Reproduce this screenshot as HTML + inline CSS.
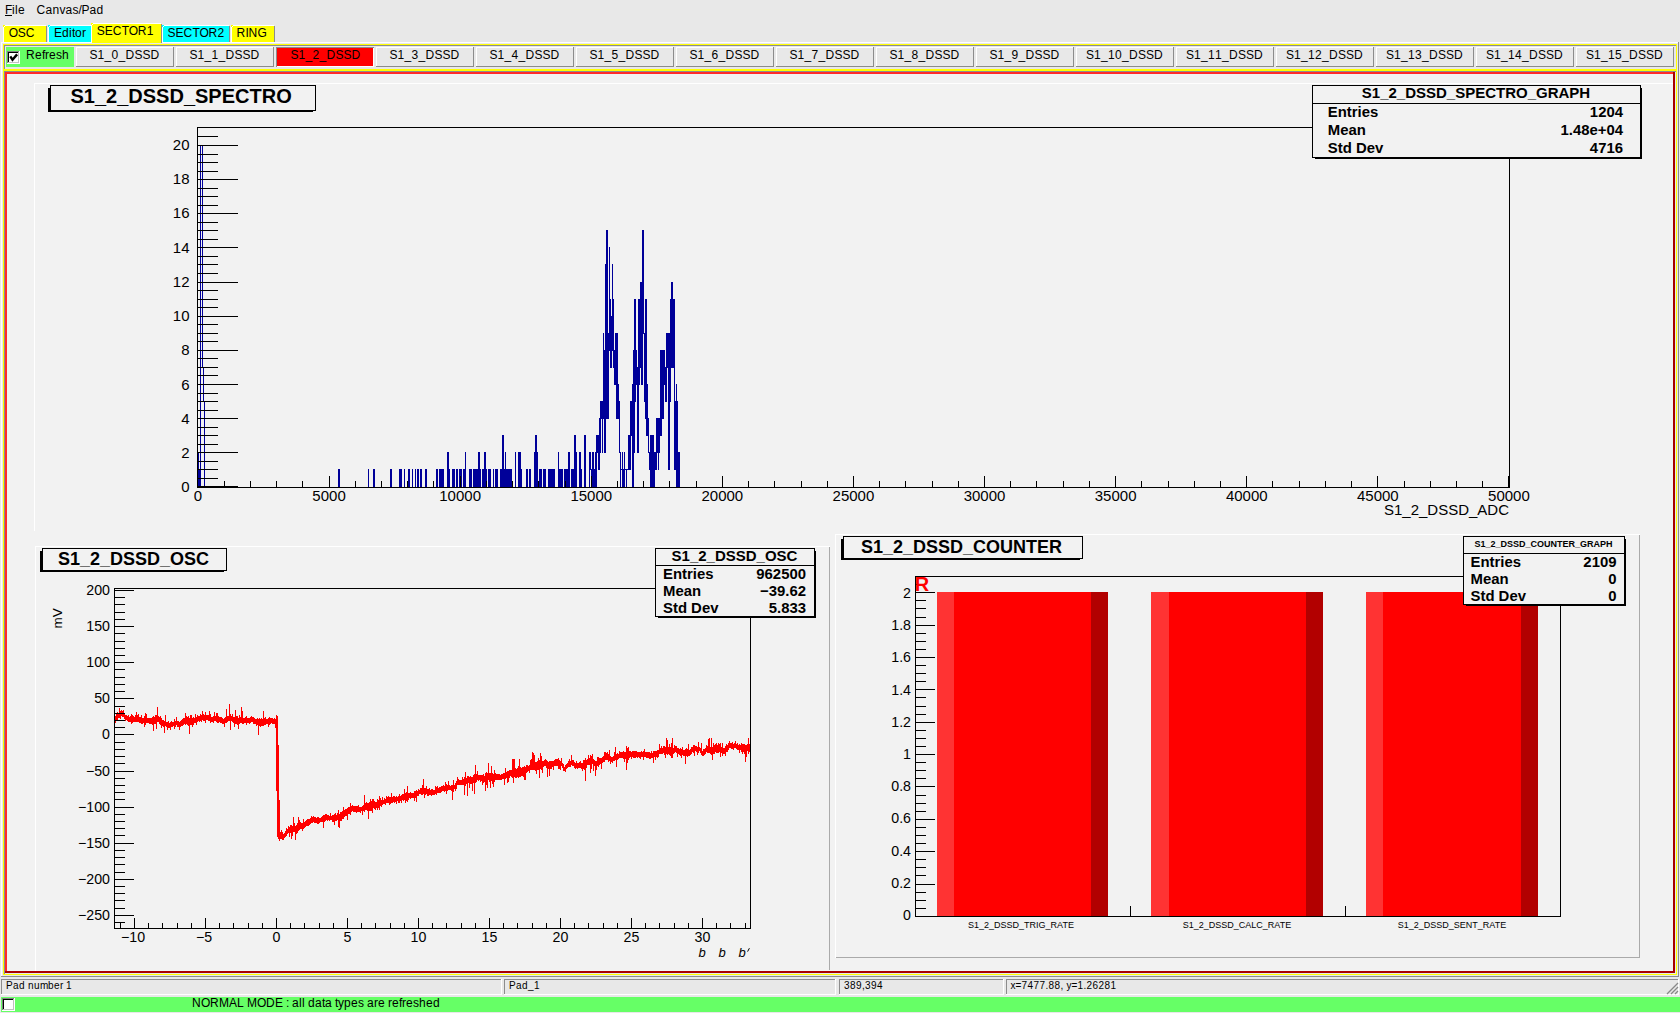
<!DOCTYPE html>
<html><head><meta charset="utf-8"><title>ROOT GUI</title>
<style>
html,body{margin:0;padding:0;width:1680px;height:1013px;overflow:hidden;background:#e8e8e8}
svg{display:block}
svg text{font-family:"Liberation Sans",sans-serif}
</style></head><body>
<svg width="1680" height="1013" viewBox="0 0 1680 1013" shape-rendering="crispEdges">
<rect x="0" y="0" width="1680" height="1013" fill="#e8e8e8"/>
<text x="5 12 15 18" y="14" font-size="12">File</text>
<rect x="5" y="15" width="7" height="1" fill="#000"/>
<text x="36.5 45.5 52.5 59.5 65.5 72.5 78.5 81.5 89.5 96.5" y="14" font-size="12">Canvas/Pad</text>
<rect x="1" y="42" width="1677" height="1" fill="#ffffff"/>
<rect x="1" y="42" width="1" height="935" fill="#ffffff"/>
<rect x="1" y="976" width="1678" height="1" fill="#8c8c8c"/>
<rect x="1678" y="42" width="1" height="935" fill="#8c8c8c"/>
<rect x="3" y="25" width="43" height="17" fill="#ffff00"/>
<rect x="5" y="25" width="41" height="1" fill="#ffffff"/>
<rect x="3" y="27" width="1" height="15" fill="#ffffff"/>
<rect x="4" y="26" width="1" height="1" fill="#ffffff"/>
<rect x="46" y="26" width="1" height="16" fill="#8c8c8c"/>
<text x="8.7 17.7 25.7" y="37" font-size="12">OSC</text>
<rect x="48" y="25" width="43" height="17" fill="#00ffff"/>
<rect x="50" y="25" width="41" height="1" fill="#ffffff"/>
<rect x="48" y="27" width="1" height="15" fill="#ffffff"/>
<rect x="49" y="26" width="1" height="1" fill="#ffffff"/>
<text x="54 62 69 72 75 82" y="37" font-size="12">Editor</text>
<rect x="162" y="25" width="67" height="17" fill="#00ffff"/>
<rect x="164" y="25" width="65" height="1" fill="#ffffff"/>
<rect x="162" y="27" width="1" height="15" fill="#ffffff"/>
<rect x="163" y="26" width="1" height="1" fill="#ffffff"/>
<rect x="229" y="26" width="1" height="16" fill="#8c8c8c"/>
<text x="167.4 175.4 183.4 192.4 199.4 208.4 217.4" y="37" font-size="12">SECTOR2</text>
<rect x="231" y="25" width="43" height="17" fill="#ffff00"/>
<rect x="233" y="25" width="41" height="1" fill="#ffffff"/>
<rect x="231" y="27" width="1" height="15" fill="#ffffff"/>
<rect x="232" y="26" width="1" height="1" fill="#ffffff"/>
<rect x="274" y="26" width="1" height="16" fill="#8c8c8c"/>
<text x="236.5 245.5 248.5 257.5" y="37" font-size="12">RING</text>
<rect x="91" y="23" width="70" height="20" fill="#ffff00"/>
<rect x="93" y="23" width="68" height="1" fill="#ffffff"/>
<rect x="91" y="25" width="1" height="18" fill="#ffffff"/>
<rect x="92" y="24" width="1" height="1" fill="#ffffff"/>
<rect x="161" y="24" width="1" height="19" fill="#8c8c8c"/>
<text x="96.8 104.8 112.8 121.8 128.8 137.8 146.8" y="35" font-size="12">SECTOR1</text>
<rect x="3" y="44" width="1674" height="1" fill="#ffff00"/>
<rect x="4" y="45" width="1672" height="1" fill="#8c8c8c"/>
<rect x="3" y="44" width="1" height="931" fill="#ffff00"/>
<rect x="4" y="45" width="1" height="929" fill="#8c8c8c"/>
<rect x="1676" y="44" width="1" height="931" fill="#ffff00"/>
<rect x="3" y="69" width="1674" height="2" fill="#ffff00"/>
<rect x="4" y="71" width="1672" height="1" fill="#8c8c8c"/>
<rect x="3" y="974" width="1674" height="1" fill="#ffff00"/>
<rect x="6" y="47" width="68" height="20" fill="#66ff66"/>
<rect x="7" y="51" width="13" height="13" fill="#ffffff"/>
<rect x="7" y="51" width="12" height="1" fill="#808080"/>
<rect x="7" y="51" width="1" height="12" fill="#808080"/>
<rect x="8" y="52" width="10" height="1" fill="#000"/>
<rect x="8" y="52" width="1" height="10" fill="#000"/>
<rect x="18" y="52" width="1" height="11" fill="#c0c0c0"/>
<rect x="8" y="62" width="11" height="1" fill="#c0c0c0"/>
<path d="M10.3 56.4 L12.5 59.8 L17.1 54.4" stroke="#000" stroke-width="2.4" fill="none" shape-rendering="geometricPrecision"/>
<text x="26 35 42 45 49 56 62" y="59" font-size="12">Refresh</text>
<rect x="76" y="47" width="98" height="20" fill="#e8e8e8"/>
<rect x="76" y="47" width="97" height="1" fill="#ffffff"/>
<rect x="76" y="47" width="1" height="19" fill="#ffffff"/>
<rect x="173" y="47" width="1" height="20" fill="#8c8c8c"/>
<rect x="76" y="66" width="98" height="1" fill="#8c8c8c"/>
<text x="89.5 97.5 104.5 111.5 118.5 125.5 134.5 142.5 150.5" y="59" font-size="12">S1_0_DSSD</text>
<rect x="176" y="47" width="98" height="20" fill="#e8e8e8"/>
<rect x="176" y="47" width="97" height="1" fill="#ffffff"/>
<rect x="176" y="47" width="1" height="19" fill="#ffffff"/>
<rect x="273" y="47" width="1" height="20" fill="#8c8c8c"/>
<rect x="176" y="66" width="98" height="1" fill="#8c8c8c"/>
<text x="189.5 197.5 204.5 211.5 218.5 225.5 234.5 242.5 250.5" y="59" font-size="12">S1_1_DSSD</text>
<rect x="276" y="47" width="98" height="20" fill="#ffffff"/>
<rect x="277" y="48" width="96" height="18" fill="#ff0000"/>
<rect x="276" y="47" width="98" height="1" fill="#8c8c8c"/>
<rect x="276" y="47" width="1" height="20" fill="#8c8c8c"/>
<text x="290.5 298.5 305.5 312.5 319.5 326.5 335.5 343.5 351.5" y="59" font-size="12">S1_2_DSSD</text>
<rect x="376" y="47" width="98" height="20" fill="#e8e8e8"/>
<rect x="376" y="47" width="97" height="1" fill="#ffffff"/>
<rect x="376" y="47" width="1" height="19" fill="#ffffff"/>
<rect x="473" y="47" width="1" height="20" fill="#8c8c8c"/>
<rect x="376" y="66" width="98" height="1" fill="#8c8c8c"/>
<text x="389.5 397.5 404.5 411.5 418.5 425.5 434.5 442.5 450.5" y="59" font-size="12">S1_3_DSSD</text>
<rect x="476" y="47" width="98" height="20" fill="#e8e8e8"/>
<rect x="476" y="47" width="97" height="1" fill="#ffffff"/>
<rect x="476" y="47" width="1" height="19" fill="#ffffff"/>
<rect x="573" y="47" width="1" height="20" fill="#8c8c8c"/>
<rect x="476" y="66" width="98" height="1" fill="#8c8c8c"/>
<text x="489.5 497.5 504.5 511.5 518.5 525.5 534.5 542.5 550.5" y="59" font-size="12">S1_4_DSSD</text>
<rect x="576" y="47" width="98" height="20" fill="#e8e8e8"/>
<rect x="576" y="47" width="97" height="1" fill="#ffffff"/>
<rect x="576" y="47" width="1" height="19" fill="#ffffff"/>
<rect x="673" y="47" width="1" height="20" fill="#8c8c8c"/>
<rect x="576" y="66" width="98" height="1" fill="#8c8c8c"/>
<text x="589.5 597.5 604.5 611.5 618.5 625.5 634.5 642.5 650.5" y="59" font-size="12">S1_5_DSSD</text>
<rect x="676" y="47" width="98" height="20" fill="#e8e8e8"/>
<rect x="676" y="47" width="97" height="1" fill="#ffffff"/>
<rect x="676" y="47" width="1" height="19" fill="#ffffff"/>
<rect x="773" y="47" width="1" height="20" fill="#8c8c8c"/>
<rect x="676" y="66" width="98" height="1" fill="#8c8c8c"/>
<text x="689.5 697.5 704.5 711.5 718.5 725.5 734.5 742.5 750.5" y="59" font-size="12">S1_6_DSSD</text>
<rect x="776" y="47" width="98" height="20" fill="#e8e8e8"/>
<rect x="776" y="47" width="97" height="1" fill="#ffffff"/>
<rect x="776" y="47" width="1" height="19" fill="#ffffff"/>
<rect x="873" y="47" width="1" height="20" fill="#8c8c8c"/>
<rect x="776" y="66" width="98" height="1" fill="#8c8c8c"/>
<text x="789.5 797.5 804.5 811.5 818.5 825.5 834.5 842.5 850.5" y="59" font-size="12">S1_7_DSSD</text>
<rect x="876" y="47" width="98" height="20" fill="#e8e8e8"/>
<rect x="876" y="47" width="97" height="1" fill="#ffffff"/>
<rect x="876" y="47" width="1" height="19" fill="#ffffff"/>
<rect x="973" y="47" width="1" height="20" fill="#8c8c8c"/>
<rect x="876" y="66" width="98" height="1" fill="#8c8c8c"/>
<text x="889.5 897.5 904.5 911.5 918.5 925.5 934.5 942.5 950.5" y="59" font-size="12">S1_8_DSSD</text>
<rect x="976" y="47" width="98" height="20" fill="#e8e8e8"/>
<rect x="976" y="47" width="97" height="1" fill="#ffffff"/>
<rect x="976" y="47" width="1" height="19" fill="#ffffff"/>
<rect x="1073" y="47" width="1" height="20" fill="#8c8c8c"/>
<rect x="976" y="66" width="98" height="1" fill="#8c8c8c"/>
<text x="989.5 997.5 1004.5 1011.5 1018.5 1025.5 1034.5 1042.5 1050.5" y="59" font-size="12">S1_9_DSSD</text>
<rect x="1076" y="47" width="98" height="20" fill="#e8e8e8"/>
<rect x="1076" y="47" width="97" height="1" fill="#ffffff"/>
<rect x="1076" y="47" width="1" height="19" fill="#ffffff"/>
<rect x="1173" y="47" width="1" height="20" fill="#8c8c8c"/>
<rect x="1076" y="66" width="98" height="1" fill="#8c8c8c"/>
<text x="1086 1094 1101 1108 1115 1122 1129 1138 1146 1154" y="59" font-size="12">S1_10_DSSD</text>
<rect x="1176" y="47" width="98" height="20" fill="#e8e8e8"/>
<rect x="1176" y="47" width="97" height="1" fill="#ffffff"/>
<rect x="1176" y="47" width="1" height="19" fill="#ffffff"/>
<rect x="1273" y="47" width="1" height="20" fill="#8c8c8c"/>
<rect x="1176" y="66" width="98" height="1" fill="#8c8c8c"/>
<text x="1186 1194 1201 1208 1215 1222 1229 1238 1246 1254" y="59" font-size="12">S1_11_DSSD</text>
<rect x="1276" y="47" width="98" height="20" fill="#e8e8e8"/>
<rect x="1276" y="47" width="97" height="1" fill="#ffffff"/>
<rect x="1276" y="47" width="1" height="19" fill="#ffffff"/>
<rect x="1373" y="47" width="1" height="20" fill="#8c8c8c"/>
<rect x="1276" y="66" width="98" height="1" fill="#8c8c8c"/>
<text x="1286 1294 1301 1308 1315 1322 1329 1338 1346 1354" y="59" font-size="12">S1_12_DSSD</text>
<rect x="1376" y="47" width="98" height="20" fill="#e8e8e8"/>
<rect x="1376" y="47" width="97" height="1" fill="#ffffff"/>
<rect x="1376" y="47" width="1" height="19" fill="#ffffff"/>
<rect x="1473" y="47" width="1" height="20" fill="#8c8c8c"/>
<rect x="1376" y="66" width="98" height="1" fill="#8c8c8c"/>
<text x="1386 1394 1401 1408 1415 1422 1429 1438 1446 1454" y="59" font-size="12">S1_13_DSSD</text>
<rect x="1476" y="47" width="98" height="20" fill="#e8e8e8"/>
<rect x="1476" y="47" width="97" height="1" fill="#ffffff"/>
<rect x="1476" y="47" width="1" height="19" fill="#ffffff"/>
<rect x="1573" y="47" width="1" height="20" fill="#8c8c8c"/>
<rect x="1476" y="66" width="98" height="1" fill="#8c8c8c"/>
<text x="1486 1494 1501 1508 1515 1522 1529 1538 1546 1554" y="59" font-size="12">S1_14_DSSD</text>
<rect x="1576" y="47" width="98" height="20" fill="#e8e8e8"/>
<rect x="1576" y="47" width="97" height="1" fill="#ffffff"/>
<rect x="1576" y="47" width="1" height="19" fill="#ffffff"/>
<rect x="1673" y="47" width="1" height="20" fill="#8c8c8c"/>
<rect x="1576" y="66" width="98" height="1" fill="#8c8c8c"/>
<text x="1586 1594 1601 1608 1615 1622 1629 1638 1646 1654" y="59" font-size="12">S1_15_DSSD</text>
<rect x="5" y="72" width="1670" height="2" fill="#ff2a2a"/>
<rect x="5" y="72" width="2" height="901" fill="#ff2a2a"/>
<rect x="5" y="971" width="1670" height="2" fill="#a80000"/>
<rect x="1673" y="72" width="2" height="901" fill="#a80000"/>
<rect x="7" y="74" width="1666" height="897" fill="#f2f2f2"/>
<rect x="34" y="83" width="1639" height="1" fill="#ffffff"/>
<rect x="34" y="83" width="1" height="448" fill="#ffffff"/>
<rect x="35" y="546" width="795" height="1" fill="#ffffff"/>
<rect x="35" y="546" width="1" height="425" fill="#ffffff"/>
<rect x="829" y="547" width="1" height="423" fill="#aaaaaa"/>
<rect x="835" y="534" width="805" height="1" fill="#ffffff"/>
<rect x="835" y="534" width="1" height="424" fill="#ffffff"/>
<rect x="1639" y="535" width="1" height="423" fill="#aaaaaa"/>
<rect x="836" y="957" width="804" height="1" fill="#aaaaaa"/>
<rect x="48" y="88" width="2" height="24" fill="#000"/>
<rect x="48" y="111" width="265" height="1" fill="#000"/>
<rect x="50" y="85" width="266" height="1" fill="#000"/>
<rect x="50" y="85" width="1" height="26" fill="#000"/>
<rect x="315" y="85" width="1" height="26" fill="#000"/>
<rect x="50" y="110" width="266" height="1" fill="#000"/>
<text x="70.5" y="103" font-size="20" font-weight="bold">S1_2_DSSD_SPECTRO</text>
<path d="M198 452h1V487h-1zM199 469h1V487h-1zM200 145h1V487h-1zM201 145h1V146h-1zM202 145h1V368h-1zM203 367h1V402h-1zM204 401h1V487h-1zM338 469h1V487h-1zM339 469h1V487h-1zM368 469h1V487h-1zM373 469h1V487h-1zM374 469h1V487h-1zM390 469h1V487h-1zM391 469h1V487h-1zM399 469h1V487h-1zM400 469h1V487h-1zM401 469h1V487h-1zM404 469h1V487h-1zM408 469h1V487h-1zM409 469h1V487h-1zM412 469h1V487h-1zM415 469h1V487h-1zM417 469h1V487h-1zM418 469h1V487h-1zM420 469h1V487h-1zM421 469h1V487h-1zM425 469h1V487h-1zM426 469h1V487h-1zM436 469h1V487h-1zM437 469h1V487h-1zM439 469h1V487h-1zM440 469h1V487h-1zM441 469h1V487h-1zM442 469h1V487h-1zM443 469h1V487h-1zM447 452h1V487h-1zM448 452h1V487h-1zM449 469h1V487h-1zM452 469h1V487h-1zM453 469h1V487h-1zM454 469h1V487h-1zM456 469h1V487h-1zM457 469h1V487h-1zM459 469h1V487h-1zM460 469h1V487h-1zM461 469h1V487h-1zM463 469h1V487h-1zM464 469h1V487h-1zM465 452h1V487h-1zM469 469h1V487h-1zM470 469h1V487h-1zM471 469h1V487h-1zM473 469h1V487h-1zM474 469h1V487h-1zM475 469h1V487h-1zM476 469h1V487h-1zM477 469h1V487h-1zM478 452h1V487h-1zM479 452h1V487h-1zM480 469h1V487h-1zM482 469h1V487h-1zM483 469h1V487h-1zM484 452h1V487h-1zM485 452h1V487h-1zM486 469h1V487h-1zM488 469h1V487h-1zM489 469h1V487h-1zM490 469h1V487h-1zM493 469h1V487h-1zM495 469h1V487h-1zM496 469h1V487h-1zM497 469h1V487h-1zM500 469h1V487h-1zM501 469h1V487h-1zM502 435h1V487h-1zM503 435h1V487h-1zM504 469h1V487h-1zM505 452h1V487h-1zM506 469h1V487h-1zM507 469h1V487h-1zM508 469h1V487h-1zM509 469h1V487h-1zM510 469h1V487h-1zM511 469h1V487h-1zM515 452h1V487h-1zM518 452h1V487h-1zM519 452h1V487h-1zM520 452h1V487h-1zM521 469h1V487h-1zM526 469h1V487h-1zM527 469h1V487h-1zM529 469h1V487h-1zM530 469h1V487h-1zM534 452h1V487h-1zM535 435h1V487h-1zM536 435h1V487h-1zM537 452h1V487h-1zM539 469h1V487h-1zM540 469h1V487h-1zM541 469h1V487h-1zM543 469h1V487h-1zM544 469h1V487h-1zM545 469h1V487h-1zM548 469h1V487h-1zM549 469h1V487h-1zM550 469h1V487h-1zM551 469h1V487h-1zM552 469h1V487h-1zM553 469h1V487h-1zM554 469h1V487h-1zM558 452h1V487h-1zM559 469h1V487h-1zM560 469h1V487h-1zM561 469h1V487h-1zM562 469h1V487h-1zM564 469h1V487h-1zM565 469h1V487h-1zM566 469h1V487h-1zM567 469h1V487h-1zM568 452h1V487h-1zM569 452h1V487h-1zM571 469h1V487h-1zM572 469h1V487h-1zM573 469h1V487h-1zM574 435h1V487h-1zM575 435h1V487h-1zM576 452h1V487h-1zM579 452h1V487h-1zM580 452h1V487h-1zM581 469h1V487h-1zM584 435h1V487h-1zM585 435h1V487h-1zM589 452h1V487h-1zM590 452h1V470h-1zM591 469h1V487h-1zM592 452h1V487h-1zM593 452h1V487h-1zM594 469h1V487h-1zM595 452h1V487h-1zM596 435h1V487h-1zM597 435h1V453h-1zM598 435h1V470h-1zM599 418h1V470h-1zM600 401h1V453h-1zM601 401h1V419h-1zM602 401h1V453h-1zM603 333h1V419h-1zM604 350h1V453h-1zM605 264h1V453h-1zM606 230h1V419h-1zM607 230h1V419h-1zM608 333h1V419h-1zM609 247h1V351h-1zM610 299h1V368h-1zM611 316h1V368h-1zM612 264h1V351h-1zM613 299h1V368h-1zM614 350h1V385h-1zM615 333h1V385h-1zM616 333h1V419h-1zM617 333h1V419h-1zM618 384h1V419h-1zM619 401h1V453h-1zM620 452h1V487h-1zM621 469h1V470h-1zM622 452h1V487h-1zM623 469h1V487h-1zM624 452h1V487h-1zM625 469h1V470h-1zM626 469h1V487h-1zM627 469h1V470h-1zM628 435h1V470h-1zM629 435h1V470h-1zM630 401h1V470h-1zM631 401h1V436h-1zM632 384h1V487h-1zM633 350h1V487h-1zM634 299h1V453h-1zM635 299h1V402h-1zM636 350h1V385h-1zM637 367h1V453h-1zM638 299h1V453h-1zM639 299h1V385h-1zM640 282h1V368h-1zM641 282h1V385h-1zM642 230h1V385h-1zM643 230h1V334h-1zM644 333h1V402h-1zM645 299h1V419h-1zM646 299h1V436h-1zM647 384h1V436h-1zM648 418h1V453h-1zM649 452h1V470h-1zM650 435h1V487h-1zM651 435h1V487h-1zM652 435h1V487h-1zM653 435h1V487h-1zM654 452h1V487h-1zM655 452h1V470h-1zM656 418h1V470h-1zM657 418h1V453h-1zM658 418h1V470h-1zM659 418h1V453h-1zM660 350h1V436h-1zM661 350h1V436h-1zM662 350h1V419h-1zM663 350h1V419h-1zM664 350h1V385h-1zM665 367h1V402h-1zM666 333h1V402h-1zM667 333h1V368h-1zM668 333h1V470h-1zM669 333h1V470h-1zM670 299h1V402h-1zM671 282h1V368h-1zM672 282h1V368h-1zM673 299h1V368h-1zM674 299h1V470h-1zM675 401h1V470h-1zM676 384h1V487h-1zM677 401h1V487h-1zM678 452h1V487h-1zM679 452h1V487h-1z" fill="#000099"/>
<rect x="197" y="127" width="1313" height="1" fill="#000"/>
<rect x="197" y="127" width="1" height="361" fill="#000"/>
<rect x="1509" y="127" width="1" height="361" fill="#000"/>
<rect x="197" y="487" width="1313" height="1" fill="#000"/>
<rect x="197" y="486" width="41" height="1" fill="#000"/>
<text x="189.5" y="492.3" font-size="15" text-anchor="end">0</text>
<rect x="197" y="478" width="21" height="1" fill="#000"/>
<rect x="197" y="469" width="21" height="1" fill="#000"/>
<rect x="197" y="461" width="21" height="1" fill="#000"/>
<rect x="197" y="452" width="41" height="1" fill="#000"/>
<text x="189.5" y="458.05" font-size="15" text-anchor="end">2</text>
<rect x="197" y="444" width="21" height="1" fill="#000"/>
<rect x="197" y="435" width="21" height="1" fill="#000"/>
<rect x="197" y="427" width="21" height="1" fill="#000"/>
<rect x="197" y="418" width="41" height="1" fill="#000"/>
<text x="189.5" y="423.8" font-size="15" text-anchor="end">4</text>
<rect x="197" y="410" width="21" height="1" fill="#000"/>
<rect x="197" y="401" width="21" height="1" fill="#000"/>
<rect x="197" y="393" width="21" height="1" fill="#000"/>
<rect x="197" y="384" width="41" height="1" fill="#000"/>
<text x="189.5" y="389.55" font-size="15" text-anchor="end">6</text>
<rect x="197" y="375" width="21" height="1" fill="#000"/>
<rect x="197" y="367" width="21" height="1" fill="#000"/>
<rect x="197" y="358" width="21" height="1" fill="#000"/>
<rect x="197" y="350" width="41" height="1" fill="#000"/>
<text x="189.5" y="355.3" font-size="15" text-anchor="end">8</text>
<rect x="197" y="341" width="21" height="1" fill="#000"/>
<rect x="197" y="333" width="21" height="1" fill="#000"/>
<rect x="197" y="324" width="21" height="1" fill="#000"/>
<rect x="197" y="316" width="41" height="1" fill="#000"/>
<text x="189.5" y="321.05" font-size="15" text-anchor="end">10</text>
<rect x="197" y="307" width="21" height="1" fill="#000"/>
<rect x="197" y="299" width="21" height="1" fill="#000"/>
<rect x="197" y="290" width="21" height="1" fill="#000"/>
<rect x="197" y="282" width="41" height="1" fill="#000"/>
<text x="189.5" y="286.8" font-size="15" text-anchor="end">12</text>
<rect x="197" y="273" width="21" height="1" fill="#000"/>
<rect x="197" y="264" width="21" height="1" fill="#000"/>
<rect x="197" y="256" width="21" height="1" fill="#000"/>
<rect x="197" y="247" width="41" height="1" fill="#000"/>
<text x="189.5" y="252.55" font-size="15" text-anchor="end">14</text>
<rect x="197" y="239" width="21" height="1" fill="#000"/>
<rect x="197" y="230" width="21" height="1" fill="#000"/>
<rect x="197" y="222" width="21" height="1" fill="#000"/>
<rect x="197" y="213" width="41" height="1" fill="#000"/>
<text x="189.5" y="218.3" font-size="15" text-anchor="end">16</text>
<rect x="197" y="205" width="21" height="1" fill="#000"/>
<rect x="197" y="196" width="21" height="1" fill="#000"/>
<rect x="197" y="188" width="21" height="1" fill="#000"/>
<rect x="197" y="179" width="41" height="1" fill="#000"/>
<text x="189.5" y="184.05" font-size="15" text-anchor="end">18</text>
<rect x="197" y="171" width="21" height="1" fill="#000"/>
<rect x="197" y="162" width="21" height="1" fill="#000"/>
<rect x="197" y="154" width="21" height="1" fill="#000"/>
<rect x="197" y="145" width="41" height="1" fill="#000"/>
<text x="189.5" y="149.8" font-size="15" text-anchor="end">20</text>
<rect x="197" y="136" width="21" height="1" fill="#000"/>
<rect x="197" y="476" width="1" height="12" fill="#000"/>
<text x="197.95" y="501" font-size="15" text-anchor="middle">0</text>
<rect x="224" y="481" width="1" height="7" fill="#000"/>
<rect x="250" y="481" width="1" height="7" fill="#000"/>
<rect x="276" y="481" width="1" height="7" fill="#000"/>
<rect x="302" y="481" width="1" height="7" fill="#000"/>
<rect x="329" y="476" width="1" height="12" fill="#000"/>
<text x="329.05" y="501" font-size="15" text-anchor="middle">5000</text>
<rect x="355" y="481" width="1" height="7" fill="#000"/>
<rect x="381" y="481" width="1" height="7" fill="#000"/>
<rect x="407" y="481" width="1" height="7" fill="#000"/>
<rect x="433" y="481" width="1" height="7" fill="#000"/>
<rect x="460" y="476" width="1" height="12" fill="#000"/>
<text x="460.15" y="501" font-size="15" text-anchor="middle">10000</text>
<rect x="486" y="481" width="1" height="7" fill="#000"/>
<rect x="512" y="481" width="1" height="7" fill="#000"/>
<rect x="538" y="481" width="1" height="7" fill="#000"/>
<rect x="565" y="481" width="1" height="7" fill="#000"/>
<rect x="591" y="476" width="1" height="12" fill="#000"/>
<text x="591.25" y="501" font-size="15" text-anchor="middle">15000</text>
<rect x="617" y="481" width="1" height="7" fill="#000"/>
<rect x="643" y="481" width="1" height="7" fill="#000"/>
<rect x="669" y="481" width="1" height="7" fill="#000"/>
<rect x="696" y="481" width="1" height="7" fill="#000"/>
<rect x="722" y="476" width="1" height="12" fill="#000"/>
<text x="722.35" y="501" font-size="15" text-anchor="middle">20000</text>
<rect x="748" y="481" width="1" height="7" fill="#000"/>
<rect x="774" y="481" width="1" height="7" fill="#000"/>
<rect x="801" y="481" width="1" height="7" fill="#000"/>
<rect x="827" y="481" width="1" height="7" fill="#000"/>
<rect x="853" y="476" width="1" height="12" fill="#000"/>
<text x="853.45" y="501" font-size="15" text-anchor="middle">25000</text>
<rect x="879" y="481" width="1" height="7" fill="#000"/>
<rect x="905" y="481" width="1" height="7" fill="#000"/>
<rect x="932" y="481" width="1" height="7" fill="#000"/>
<rect x="958" y="481" width="1" height="7" fill="#000"/>
<rect x="984" y="476" width="1" height="12" fill="#000"/>
<text x="984.55" y="501" font-size="15" text-anchor="middle">30000</text>
<rect x="1010" y="481" width="1" height="7" fill="#000"/>
<rect x="1036" y="481" width="1" height="7" fill="#000"/>
<rect x="1063" y="481" width="1" height="7" fill="#000"/>
<rect x="1089" y="481" width="1" height="7" fill="#000"/>
<rect x="1115" y="476" width="1" height="12" fill="#000"/>
<text x="1115.65" y="501" font-size="15" text-anchor="middle">35000</text>
<rect x="1141" y="481" width="1" height="7" fill="#000"/>
<rect x="1168" y="481" width="1" height="7" fill="#000"/>
<rect x="1194" y="481" width="1" height="7" fill="#000"/>
<rect x="1220" y="481" width="1" height="7" fill="#000"/>
<rect x="1246" y="476" width="1" height="12" fill="#000"/>
<text x="1246.75" y="501" font-size="15" text-anchor="middle">40000</text>
<rect x="1272" y="481" width="1" height="7" fill="#000"/>
<rect x="1299" y="481" width="1" height="7" fill="#000"/>
<rect x="1325" y="481" width="1" height="7" fill="#000"/>
<rect x="1351" y="481" width="1" height="7" fill="#000"/>
<rect x="1377" y="476" width="1" height="12" fill="#000"/>
<text x="1377.85" y="501" font-size="15" text-anchor="middle">45000</text>
<rect x="1404" y="481" width="1" height="7" fill="#000"/>
<rect x="1430" y="481" width="1" height="7" fill="#000"/>
<rect x="1456" y="481" width="1" height="7" fill="#000"/>
<rect x="1482" y="481" width="1" height="7" fill="#000"/>
<rect x="1508" y="476" width="1" height="12" fill="#000"/>
<text x="1508.95" y="501" font-size="15" text-anchor="middle">50000</text>
<text x="1509" y="515" font-size="15" text-anchor="end">S1_2_DSSD_ADC</text>
<rect x="1313" y="86" width="327" height="71" fill="#f2f2f2"/>
<rect x="1641" y="88" width="1" height="71" fill="#000"/>
<rect x="1315" y="158" width="327" height="1" fill="#000"/>
<rect x="1312" y="85" width="329" height="1" fill="#000"/>
<rect x="1312" y="85" width="1" height="73" fill="#000"/>
<rect x="1640" y="85" width="1" height="73" fill="#000"/>
<rect x="1312" y="157" width="329" height="1" fill="#000"/>
<rect x="1312" y="103" width="329" height="1" fill="#000"/>
<text x="1476" y="98" font-size="15" font-weight="bold" text-anchor="middle">S1_2_DSSD_SPECTRO_GRAPH</text>
<text x="1327.8" y="117" font-size="14.9" font-weight="bold">Entries</text>
<text x="1623" y="117" font-size="14.9" font-weight="bold" text-anchor="end">1204</text>
<text x="1327.8" y="135" font-size="14.9" font-weight="bold">Mean</text>
<text x="1623" y="135" font-size="14.9" font-weight="bold" text-anchor="end">1.48e+04</text>
<text x="1327.8" y="153" font-size="14.9" font-weight="bold">Std Dev</text>
<text x="1623" y="153" font-size="14.9" font-weight="bold" text-anchor="end">4716</text>
<rect x="40" y="551" width="2" height="21" fill="#000"/>
<rect x="40" y="571" width="184" height="1" fill="#000"/>
<rect x="42" y="548" width="185" height="1" fill="#000"/>
<rect x="42" y="548" width="1" height="23" fill="#000"/>
<rect x="226" y="548" width="1" height="23" fill="#000"/>
<rect x="42" y="570" width="185" height="1" fill="#000"/>
<text x="58" y="565" font-size="18" font-weight="bold">S1_2_DSSD_OSC</text>
<path d="M115 716h1V723h-1zM116 714h1V720h-1zM117 712h1V720h-1zM118 713h1V718h-1zM119 708h1V718h-1zM120 711h1V719h-1zM121 710h1V716h-1zM122 711h1V717h-1zM123 710h1V717h-1zM124 713h1V719h-1zM125 715h1V721h-1zM126 715h1V720h-1zM127 716h1V721h-1zM128 715h1V722h-1zM129 717h1V722h-1zM130 716h1V722h-1zM131 714h1V724h-1zM132 715h1V723h-1zM133 716h1V722h-1zM134 717h1V722h-1zM135 715h1V722h-1zM136 712h1V722h-1zM137 715h1V722h-1zM138 714h1V722h-1zM139 717h1V723h-1zM140 717h1V723h-1zM141 715h1V724h-1zM142 718h1V724h-1zM143 718h1V723h-1zM144 716h1V727h-1zM145 713h1V725h-1zM146 714h1V723h-1zM147 718h1V723h-1zM148 718h1V723h-1zM149 718h1V724h-1zM150 718h1V724h-1zM151 718h1V724h-1zM152 717h1V725h-1zM153 716h1V731h-1zM154 717h1V724h-1zM155 715h1V724h-1zM156 715h1V729h-1zM157 707h1V722h-1zM158 716h1V722h-1zM159 717h1V724h-1zM160 716h1V725h-1zM161 718h1V728h-1zM162 720h1V726h-1zM163 720h1V727h-1zM164 721h1V733h-1zM165 715h1V726h-1zM166 722h1V727h-1zM167 722h1V730h-1zM168 721h1V728h-1zM169 723h1V728h-1zM170 722h1V730h-1zM171 721h1V727h-1zM172 722h1V727h-1zM173 722h1V726h-1zM174 719h1V729h-1zM175 721h1V727h-1zM176 717h1V725h-1zM177 721h1V727h-1zM178 721h1V727h-1zM179 722h1V730h-1zM180 721h1V727h-1zM181 720h1V726h-1zM182 719h1V726h-1zM183 718h1V725h-1zM184 718h1V724h-1zM185 713h1V725h-1zM186 716h1V724h-1zM187 717h1V725h-1zM188 716h1V726h-1zM189 718h1V734h-1zM190 715h1V725h-1zM191 715h1V725h-1zM192 718h1V727h-1zM193 717h1V725h-1zM194 718h1V723h-1zM195 714h1V723h-1zM196 717h1V725h-1zM197 715h1V722h-1zM198 716h1V721h-1zM199 716h1V722h-1zM200 714h1V721h-1zM201 715h1V722h-1zM202 711h1V720h-1zM203 714h1V721h-1zM204 715h1V721h-1zM205 712h1V723h-1zM206 715h1V720h-1zM207 715h1V720h-1zM208 715h1V721h-1zM209 711h1V721h-1zM210 714h1V723h-1zM211 717h1V722h-1zM212 717h1V722h-1zM213 716h1V723h-1zM214 712h1V721h-1zM215 716h1V721h-1zM216 713h1V722h-1zM217 713h1V723h-1zM218 716h1V723h-1zM219 717h1V722h-1zM220 717h1V723h-1zM221 717h1V723h-1zM222 718h1V724h-1zM223 719h1V724h-1zM224 718h1V727h-1zM225 717h1V723h-1zM226 709h1V723h-1zM227 716h1V722h-1zM228 716h1V721h-1zM229 704h1V721h-1zM230 714h1V730h-1zM231 716h1V721h-1zM232 714h1V722h-1zM233 717h1V723h-1zM234 717h1V727h-1zM235 710h1V724h-1zM236 716h1V724h-1zM237 716h1V725h-1zM238 718h1V729h-1zM239 715h1V724h-1zM240 717h1V723h-1zM241 707h1V723h-1zM242 711h1V724h-1zM243 718h1V724h-1zM244 718h1V723h-1zM245 717h1V723h-1zM246 716h1V725h-1zM247 718h1V723h-1zM248 718h1V723h-1zM249 718h1V724h-1zM250 717h1V723h-1zM251 716h1V722h-1zM252 717h1V722h-1zM253 717h1V724h-1zM254 718h1V724h-1zM255 719h1V724h-1zM256 719h1V726h-1zM257 718h1V725h-1zM258 719h1V735h-1zM259 718h1V726h-1zM260 719h1V727h-1zM261 718h1V726h-1zM262 719h1V726h-1zM263 711h1V726h-1zM264 718h1V725h-1zM265 717h1V725h-1zM266 719h1V724h-1zM267 719h1V724h-1zM268 718h1V727h-1zM269 717h1V725h-1zM270 718h1V724h-1zM271 718h1V723h-1zM272 718h1V724h-1zM273 719h1V724h-1zM274 718h1V724h-1zM275 719h1V728h-1zM276 715h1V791h-1zM277 716h1V837h-1zM278 745h1V839h-1zM279 800h1V841h-1zM280 832h1V839h-1zM281 830h1V839h-1zM282 832h1V840h-1zM283 834h1V840h-1zM284 833h1V838h-1zM285 831h1V837h-1zM286 828h1V836h-1zM287 829h1V834h-1zM288 826h1V833h-1zM289 827h1V837h-1zM290 825h1V833h-1zM291 825h1V839h-1zM292 826h1V836h-1zM293 817h1V832h-1zM294 823h1V832h-1zM295 826h1V840h-1zM296 825h1V834h-1zM297 823h1V833h-1zM298 817h1V831h-1zM299 820h1V830h-1zM300 822h1V829h-1zM301 823h1V829h-1zM302 823h1V831h-1zM303 819h1V829h-1zM304 822h1V828h-1zM305 821h1V827h-1zM306 820h1V826h-1zM307 819h1V826h-1zM308 819h1V826h-1zM309 819h1V825h-1zM310 818h1V824h-1zM311 816h1V823h-1zM312 817h1V823h-1zM313 816h1V822h-1zM314 817h1V823h-1zM315 817h1V823h-1zM316 818h1V823h-1zM317 817h1V824h-1zM318 817h1V824h-1zM319 818h1V823h-1zM320 818h1V822h-1zM321 817h1V822h-1zM322 816h1V822h-1zM323 815h1V828h-1zM324 815h1V822h-1zM325 814h1V821h-1zM326 814h1V820h-1zM327 815h1V821h-1zM328 815h1V820h-1zM329 816h1V821h-1zM330 813h1V820h-1zM331 816h1V820h-1zM332 815h1V822h-1zM333 815h1V822h-1zM334 814h1V825h-1zM335 813h1V821h-1zM336 815h1V821h-1zM337 813h1V820h-1zM338 810h1V827h-1zM339 814h1V828h-1zM340 812h1V821h-1zM341 812h1V821h-1zM342 811h1V819h-1zM343 807h1V819h-1zM344 810h1V817h-1zM345 809h1V816h-1zM346 809h1V816h-1zM347 808h1V820h-1zM348 807h1V814h-1zM349 807h1V814h-1zM350 803h1V815h-1zM351 806h1V812h-1zM352 805h1V811h-1zM353 806h1V812h-1zM354 806h1V812h-1zM355 806h1V812h-1zM356 806h1V813h-1zM357 806h1V812h-1zM358 805h1V812h-1zM359 807h1V812h-1zM360 807h1V813h-1zM361 807h1V811h-1zM362 806h1V815h-1zM363 805h1V811h-1zM364 795h1V812h-1zM365 803h1V810h-1zM366 802h1V810h-1zM367 803h1V811h-1zM368 803h1V819h-1zM369 802h1V811h-1zM370 799h1V811h-1zM371 801h1V811h-1zM372 799h1V813h-1zM373 799h1V808h-1zM374 801h1V809h-1zM375 802h1V810h-1zM376 802h1V808h-1zM377 799h1V810h-1zM378 800h1V808h-1zM379 796h1V810h-1zM380 798h1V806h-1zM381 800h1V807h-1zM382 797h1V805h-1zM383 800h1V804h-1zM384 798h1V804h-1zM385 799h1V805h-1zM386 796h1V803h-1zM387 797h1V803h-1zM388 796h1V803h-1zM389 797h1V805h-1zM390 797h1V804h-1zM391 793h1V803h-1zM392 797h1V803h-1zM393 796h1V802h-1zM394 796h1V803h-1zM395 797h1V802h-1zM396 796h1V804h-1zM397 797h1V801h-1zM398 796h1V803h-1zM399 794h1V803h-1zM400 796h1V801h-1zM401 795h1V803h-1zM402 794h1V800h-1zM403 794h1V801h-1zM404 789h1V800h-1zM405 793h1V803h-1zM406 792h1V801h-1zM407 786h1V802h-1zM408 793h1V800h-1zM409 793h1V798h-1zM410 792h1V799h-1zM411 793h1V798h-1zM412 793h1V798h-1zM413 793h1V798h-1zM414 791h1V801h-1zM415 791h1V798h-1zM416 790h1V802h-1zM417 791h1V796h-1zM418 789h1V796h-1zM419 790h1V794h-1zM420 788h1V794h-1zM421 788h1V795h-1zM422 785h1V795h-1zM423 779h1V794h-1zM424 788h1V798h-1zM425 788h1V795h-1zM426 786h1V794h-1zM427 789h1V796h-1zM428 789h1V796h-1zM429 788h1V795h-1zM430 790h1V795h-1zM431 789h1V796h-1zM432 789h1V795h-1zM433 790h1V795h-1zM434 790h1V795h-1zM435 786h1V794h-1zM436 787h1V795h-1zM437 786h1V793h-1zM438 788h1V793h-1zM439 787h1V793h-1zM440 787h1V793h-1zM441 786h1V792h-1zM442 786h1V791h-1zM443 785h1V791h-1zM444 786h1V792h-1zM445 782h1V791h-1zM446 784h1V794h-1zM447 785h1V791h-1zM448 781h1V790h-1zM449 785h1V790h-1zM450 786h1V790h-1zM451 785h1V791h-1zM452 785h1V800h-1zM453 780h1V792h-1zM454 785h1V789h-1zM455 783h1V791h-1zM456 781h1V789h-1zM457 777h1V785h-1zM458 779h1V785h-1zM459 780h1V785h-1zM460 780h1V785h-1zM461 780h1V785h-1zM462 777h1V785h-1zM463 779h1V785h-1zM464 777h1V795h-1zM465 772h1V786h-1zM466 778h1V784h-1zM467 776h1V796h-1zM468 776h1V783h-1zM469 777h1V788h-1zM470 776h1V784h-1zM471 777h1V784h-1zM472 777h1V791h-1zM473 775h1V783h-1zM474 774h1V794h-1zM475 765h1V783h-1zM476 774h1V782h-1zM477 771h1V780h-1zM478 775h1V781h-1zM479 775h1V780h-1zM480 775h1V782h-1zM481 775h1V781h-1zM482 775h1V785h-1zM483 774h1V783h-1zM484 776h1V782h-1zM485 773h1V791h-1zM486 772h1V785h-1zM487 773h1V788h-1zM488 763h1V780h-1zM489 773h1V782h-1zM490 773h1V788h-1zM491 766h1V781h-1zM492 773h1V784h-1zM493 774h1V787h-1zM494 770h1V782h-1zM495 773h1V780h-1zM496 774h1V780h-1zM497 774h1V780h-1zM498 774h1V780h-1zM499 774h1V780h-1zM500 775h1V780h-1zM501 774h1V780h-1zM502 774h1V779h-1zM503 773h1V779h-1zM504 773h1V785h-1zM505 768h1V779h-1zM506 772h1V778h-1zM507 771h1V783h-1zM508 771h1V782h-1zM509 770h1V778h-1zM510 770h1V776h-1zM511 770h1V777h-1zM512 759h1V778h-1zM513 759h1V783h-1zM514 759h1V777h-1zM515 768h1V778h-1zM516 769h1V778h-1zM517 768h1V777h-1zM518 766h1V778h-1zM519 759h1V777h-1zM520 767h1V777h-1zM521 768h1V776h-1zM522 767h1V776h-1zM523 767h1V777h-1zM524 766h1V780h-1zM525 767h1V780h-1zM526 765h1V773h-1zM527 765h1V772h-1zM528 766h1V771h-1zM529 765h1V773h-1zM530 760h1V770h-1zM531 759h1V770h-1zM532 752h1V770h-1zM533 753h1V770h-1zM534 755h1V770h-1zM535 762h1V771h-1zM536 762h1V774h-1zM537 761h1V770h-1zM538 758h1V770h-1zM539 760h1V778h-1zM540 753h1V769h-1zM541 756h1V770h-1zM542 761h1V773h-1zM543 761h1V767h-1zM544 760h1V766h-1zM545 759h1V766h-1zM546 760h1V768h-1zM547 761h1V777h-1zM548 762h1V769h-1zM549 761h1V776h-1zM550 761h1V769h-1zM551 761h1V769h-1zM552 761h1V767h-1zM553 761h1V770h-1zM554 760h1V766h-1zM555 759h1V766h-1zM556 759h1V766h-1zM557 759h1V766h-1zM558 758h1V769h-1zM559 760h1V769h-1zM560 761h1V770h-1zM561 758h1V766h-1zM562 763h1V768h-1zM563 764h1V771h-1zM564 767h1V771h-1zM565 765h1V772h-1zM566 764h1V769h-1zM567 763h1V768h-1zM568 761h1V767h-1zM569 759h1V767h-1zM570 761h1V767h-1zM571 755h1V765h-1zM572 760h1V766h-1zM573 760h1V766h-1zM574 762h1V768h-1zM575 763h1V769h-1zM576 761h1V768h-1zM577 763h1V769h-1zM578 763h1V768h-1zM579 762h1V768h-1zM580 761h1V768h-1zM581 763h1V769h-1zM582 763h1V771h-1zM583 760h1V769h-1zM584 760h1V770h-1zM585 758h1V781h-1zM586 760h1V768h-1zM587 759h1V765h-1zM588 755h1V765h-1zM589 758h1V765h-1zM590 755h1V773h-1zM591 756h1V769h-1zM592 754h1V764h-1zM593 759h1V771h-1zM594 760h1V766h-1zM595 761h1V776h-1zM596 761h1V770h-1zM597 757h1V766h-1zM598 757h1V767h-1zM599 758h1V765h-1zM600 758h1V764h-1zM601 758h1V769h-1zM602 757h1V763h-1zM603 756h1V762h-1zM604 752h1V762h-1zM605 752h1V760h-1zM606 753h1V760h-1zM607 752h1V760h-1zM608 754h1V762h-1zM609 750h1V761h-1zM610 756h1V764h-1zM611 757h1V762h-1zM612 757h1V763h-1zM613 756h1V761h-1zM614 752h1V761h-1zM615 747h1V760h-1zM616 754h1V767h-1zM617 753h1V760h-1zM618 754h1V759h-1zM619 751h1V758h-1zM620 752h1V758h-1zM621 752h1V758h-1zM622 752h1V758h-1zM623 751h1V759h-1zM624 752h1V762h-1zM625 752h1V759h-1zM626 746h1V770h-1zM627 748h1V763h-1zM628 747h1V760h-1zM629 751h1V758h-1zM630 751h1V757h-1zM631 752h1V759h-1zM632 751h1V757h-1zM633 751h1V758h-1zM634 751h1V758h-1zM635 751h1V758h-1zM636 751h1V757h-1zM637 752h1V758h-1zM638 752h1V757h-1zM639 752h1V758h-1zM640 752h1V759h-1zM641 751h1V757h-1zM642 752h1V757h-1zM643 751h1V760h-1zM644 749h1V757h-1zM645 752h1V757h-1zM646 752h1V758h-1zM647 752h1V758h-1zM648 752h1V758h-1zM649 752h1V759h-1zM650 753h1V759h-1zM651 751h1V758h-1zM652 753h1V758h-1zM653 751h1V763h-1zM654 751h1V757h-1zM655 751h1V760h-1zM656 751h1V757h-1zM657 750h1V758h-1zM658 750h1V757h-1zM659 744h1V754h-1zM660 748h1V754h-1zM661 746h1V754h-1zM662 748h1V754h-1zM663 746h1V753h-1zM664 746h1V755h-1zM665 747h1V758h-1zM666 738h1V754h-1zM667 740h1V755h-1zM668 747h1V754h-1zM669 744h1V755h-1zM670 747h1V756h-1zM671 743h1V758h-1zM672 738h1V758h-1zM673 748h1V754h-1zM674 745h1V753h-1zM675 746h1V752h-1zM676 746h1V753h-1zM677 748h1V757h-1zM678 748h1V754h-1zM679 749h1V755h-1zM680 748h1V756h-1zM681 749h1V758h-1zM682 747h1V755h-1zM683 750h1V756h-1zM684 750h1V756h-1zM685 749h1V764h-1zM686 748h1V756h-1zM687 749h1V757h-1zM688 744h1V756h-1zM689 750h1V756h-1zM690 749h1V755h-1zM691 747h1V754h-1zM692 747h1V752h-1zM693 745h1V753h-1zM694 745h1V756h-1zM695 746h1V751h-1zM696 746h1V752h-1zM697 747h1V755h-1zM698 742h1V753h-1zM699 747h1V751h-1zM700 748h1V753h-1zM701 743h1V755h-1zM702 751h1V756h-1zM703 749h1V756h-1zM704 749h1V755h-1zM705 748h1V754h-1zM706 745h1V752h-1zM707 746h1V753h-1zM708 739h1V753h-1zM709 738h1V753h-1zM710 747h1V754h-1zM711 738h1V755h-1zM712 747h1V760h-1zM713 743h1V754h-1zM714 745h1V754h-1zM715 744h1V752h-1zM716 743h1V753h-1zM717 745h1V753h-1zM718 743h1V753h-1zM719 744h1V752h-1zM720 743h1V757h-1zM721 747h1V753h-1zM722 743h1V756h-1zM723 748h1V754h-1zM724 748h1V754h-1zM725 746h1V756h-1zM726 744h1V752h-1zM727 745h1V752h-1zM728 743h1V750h-1zM729 741h1V748h-1zM730 743h1V748h-1zM731 743h1V749h-1zM732 742h1V749h-1zM733 744h1V750h-1zM734 743h1V748h-1zM735 741h1V748h-1zM736 744h1V749h-1zM737 743h1V750h-1zM738 745h1V750h-1zM739 744h1V753h-1zM740 745h1V750h-1zM741 743h1V752h-1zM742 744h1V754h-1zM743 744h1V752h-1zM744 744h1V754h-1zM745 745h1V762h-1zM746 745h1V757h-1zM747 744h1V751h-1zM748 738h1V754h-1zM749 744h1V752h-1zM750 741h1V753h-1z" fill="#ff0000"/>
<rect x="114" y="588" width="637" height="1" fill="#000"/>
<rect x="114" y="588" width="1" height="341" fill="#000"/>
<rect x="750" y="588" width="1" height="341" fill="#000"/>
<rect x="114" y="928" width="637" height="1" fill="#000"/>
<rect x="114" y="590" width="20" height="1" fill="#000"/>
<text x="110" y="595" font-size="14.2" text-anchor="end">200</text>
<rect x="114" y="597" width="11" height="1" fill="#000"/>
<rect x="114" y="604" width="11" height="1" fill="#000"/>
<rect x="114" y="612" width="11" height="1" fill="#000"/>
<rect x="114" y="619" width="11" height="1" fill="#000"/>
<rect x="114" y="626" width="20" height="1" fill="#000"/>
<text x="110" y="631" font-size="14.2" text-anchor="end">150</text>
<rect x="114" y="633" width="11" height="1" fill="#000"/>
<rect x="114" y="641" width="11" height="1" fill="#000"/>
<rect x="114" y="648" width="11" height="1" fill="#000"/>
<rect x="114" y="655" width="11" height="1" fill="#000"/>
<rect x="114" y="662" width="20" height="1" fill="#000"/>
<text x="110" y="667" font-size="14.2" text-anchor="end">100</text>
<rect x="114" y="669" width="11" height="1" fill="#000"/>
<rect x="114" y="677" width="11" height="1" fill="#000"/>
<rect x="114" y="684" width="11" height="1" fill="#000"/>
<rect x="114" y="691" width="11" height="1" fill="#000"/>
<rect x="114" y="698" width="20" height="1" fill="#000"/>
<text x="110" y="703" font-size="14.2" text-anchor="end">50</text>
<rect x="114" y="706" width="11" height="1" fill="#000"/>
<rect x="114" y="713" width="11" height="1" fill="#000"/>
<rect x="114" y="720" width="11" height="1" fill="#000"/>
<rect x="114" y="727" width="11" height="1" fill="#000"/>
<rect x="114" y="734" width="20" height="1" fill="#000"/>
<text x="110" y="739" font-size="14.2" text-anchor="end">0</text>
<rect x="114" y="742" width="11" height="1" fill="#000"/>
<rect x="114" y="749" width="11" height="1" fill="#000"/>
<rect x="114" y="756" width="11" height="1" fill="#000"/>
<rect x="114" y="763" width="11" height="1" fill="#000"/>
<rect x="114" y="771" width="20" height="1" fill="#000"/>
<text x="110" y="776" font-size="14.2" text-anchor="end">−50</text>
<rect x="114" y="778" width="11" height="1" fill="#000"/>
<rect x="114" y="785" width="11" height="1" fill="#000"/>
<rect x="114" y="792" width="11" height="1" fill="#000"/>
<rect x="114" y="799" width="11" height="1" fill="#000"/>
<rect x="114" y="807" width="20" height="1" fill="#000"/>
<text x="110" y="812" font-size="14.2" text-anchor="end">−100</text>
<rect x="114" y="814" width="11" height="1" fill="#000"/>
<rect x="114" y="821" width="11" height="1" fill="#000"/>
<rect x="114" y="828" width="11" height="1" fill="#000"/>
<rect x="114" y="835" width="11" height="1" fill="#000"/>
<rect x="114" y="843" width="20" height="1" fill="#000"/>
<text x="110" y="848" font-size="14.2" text-anchor="end">−150</text>
<rect x="114" y="850" width="11" height="1" fill="#000"/>
<rect x="114" y="857" width="11" height="1" fill="#000"/>
<rect x="114" y="864" width="11" height="1" fill="#000"/>
<rect x="114" y="872" width="11" height="1" fill="#000"/>
<rect x="114" y="879" width="20" height="1" fill="#000"/>
<text x="110" y="884" font-size="14.2" text-anchor="end">−200</text>
<rect x="114" y="886" width="11" height="1" fill="#000"/>
<rect x="114" y="893" width="11" height="1" fill="#000"/>
<rect x="114" y="900" width="11" height="1" fill="#000"/>
<rect x="114" y="908" width="11" height="1" fill="#000"/>
<rect x="114" y="915" width="20" height="1" fill="#000"/>
<text x="110" y="920" font-size="14.2" text-anchor="end">−250</text>
<rect x="114" y="922" width="11" height="1" fill="#000"/>
<rect x="120" y="923" width="1" height="6" fill="#000"/>
<rect x="134" y="918" width="1" height="11" fill="#000"/>
<text x="133" y="942" font-size="14.2" text-anchor="middle">−10</text>
<rect x="148" y="923" width="1" height="6" fill="#000"/>
<rect x="162" y="923" width="1" height="6" fill="#000"/>
<rect x="177" y="923" width="1" height="6" fill="#000"/>
<rect x="191" y="923" width="1" height="6" fill="#000"/>
<rect x="205" y="918" width="1" height="11" fill="#000"/>
<text x="204" y="942" font-size="14.2" text-anchor="middle">−5</text>
<rect x="219" y="923" width="1" height="6" fill="#000"/>
<rect x="233" y="923" width="1" height="6" fill="#000"/>
<rect x="248" y="923" width="1" height="6" fill="#000"/>
<rect x="262" y="923" width="1" height="6" fill="#000"/>
<rect x="276" y="918" width="1" height="11" fill="#000"/>
<text x="276.5" y="942" font-size="14.2" text-anchor="middle">0</text>
<rect x="290" y="923" width="1" height="6" fill="#000"/>
<rect x="304" y="923" width="1" height="6" fill="#000"/>
<rect x="319" y="923" width="1" height="6" fill="#000"/>
<rect x="333" y="923" width="1" height="6" fill="#000"/>
<rect x="347" y="918" width="1" height="11" fill="#000"/>
<text x="347.5" y="942" font-size="14.2" text-anchor="middle">5</text>
<rect x="361" y="923" width="1" height="6" fill="#000"/>
<rect x="375" y="923" width="1" height="6" fill="#000"/>
<rect x="390" y="923" width="1" height="6" fill="#000"/>
<rect x="404" y="923" width="1" height="6" fill="#000"/>
<rect x="418" y="918" width="1" height="11" fill="#000"/>
<text x="418.5" y="942" font-size="14.2" text-anchor="middle">10</text>
<rect x="432" y="923" width="1" height="6" fill="#000"/>
<rect x="446" y="923" width="1" height="6" fill="#000"/>
<rect x="461" y="923" width="1" height="6" fill="#000"/>
<rect x="475" y="923" width="1" height="6" fill="#000"/>
<rect x="489" y="918" width="1" height="11" fill="#000"/>
<text x="489.5" y="942" font-size="14.2" text-anchor="middle">15</text>
<rect x="503" y="923" width="1" height="6" fill="#000"/>
<rect x="517" y="923" width="1" height="6" fill="#000"/>
<rect x="532" y="923" width="1" height="6" fill="#000"/>
<rect x="546" y="923" width="1" height="6" fill="#000"/>
<rect x="560" y="918" width="1" height="11" fill="#000"/>
<text x="560.5" y="942" font-size="14.2" text-anchor="middle">20</text>
<rect x="574" y="923" width="1" height="6" fill="#000"/>
<rect x="588" y="923" width="1" height="6" fill="#000"/>
<rect x="603" y="923" width="1" height="6" fill="#000"/>
<rect x="617" y="923" width="1" height="6" fill="#000"/>
<rect x="631" y="918" width="1" height="11" fill="#000"/>
<text x="631.5" y="942" font-size="14.2" text-anchor="middle">25</text>
<rect x="645" y="923" width="1" height="6" fill="#000"/>
<rect x="659" y="923" width="1" height="6" fill="#000"/>
<rect x="674" y="923" width="1" height="6" fill="#000"/>
<rect x="688" y="923" width="1" height="6" fill="#000"/>
<rect x="702" y="918" width="1" height="11" fill="#000"/>
<text x="702.5" y="942" font-size="14.2" text-anchor="middle">30</text>
<rect x="716" y="923" width="1" height="6" fill="#000"/>
<rect x="730" y="923" width="1" height="6" fill="#000"/>
<rect x="745" y="923" width="1" height="6" fill="#000"/>
<text transform="translate(62 628.5) rotate(-90)" font-size="13.5">mV</text>
<text x="698.5" y="957" font-size="13" font-style="italic">b</text>
<text x="718.5" y="957" font-size="13" font-style="italic">b</text>
<text x="738.5" y="957" font-size="13" font-style="italic">b</text>
<path d="M747.6 951.6 L749.4 948.2" stroke="#000" stroke-width="1" shape-rendering="geometricPrecision"/>
<rect x="656" y="549" width="158" height="67" fill="#f2f2f2"/>
<rect x="815" y="551" width="1" height="67" fill="#000"/>
<rect x="658" y="617" width="158" height="1" fill="#000"/>
<rect x="655" y="548" width="160" height="1" fill="#000"/>
<rect x="655" y="548" width="1" height="69" fill="#000"/>
<rect x="814" y="548" width="1" height="69" fill="#000"/>
<rect x="655" y="616" width="160" height="1" fill="#000"/>
<rect x="655" y="565" width="160" height="1" fill="#000"/>
<text x="734.5" y="561" font-size="15" font-weight="bold" text-anchor="middle">S1_2_DSSD_OSC</text>
<text x="663" y="579" font-size="14.9" font-weight="bold">Entries</text>
<text x="806" y="579" font-size="14.9" font-weight="bold" text-anchor="end">962500</text>
<text x="663" y="596" font-size="14.9" font-weight="bold">Mean</text>
<text x="806" y="596" font-size="14.9" font-weight="bold" text-anchor="end">−39.62</text>
<text x="663" y="613" font-size="14.9" font-weight="bold">Std Dev</text>
<text x="806" y="613" font-size="14.9" font-weight="bold" text-anchor="end">5.833</text>
<rect x="841" y="539" width="2" height="21" fill="#000"/>
<rect x="841" y="559" width="239" height="1" fill="#000"/>
<rect x="843" y="536" width="240" height="1" fill="#000"/>
<rect x="843" y="536" width="1" height="23" fill="#000"/>
<rect x="1082" y="536" width="1" height="23" fill="#000"/>
<rect x="843" y="558" width="240" height="1" fill="#000"/>
<text x="861" y="553" font-size="18" font-weight="bold">S1_2_DSSD_COUNTER</text>
<rect x="937" y="592" width="171" height="324" fill="#ff0000"/>
<rect x="937" y="592" width="17" height="324" fill="#ff3333"/>
<rect x="1091" y="592" width="17" height="324" fill="#b20000"/>
<rect x="1151" y="592" width="172" height="324" fill="#ff0000"/>
<rect x="1151" y="592" width="18" height="324" fill="#ff3333"/>
<rect x="1306" y="592" width="17" height="324" fill="#b20000"/>
<rect x="1366" y="592" width="172" height="324" fill="#ff0000"/>
<rect x="1366" y="592" width="17" height="324" fill="#ff3333"/>
<rect x="1521" y="592" width="17" height="324" fill="#b20000"/>
<rect x="915" y="576" width="646" height="1" fill="#000"/>
<rect x="915" y="576" width="1" height="341" fill="#000"/>
<rect x="1560" y="576" width="1" height="341" fill="#000"/>
<rect x="915" y="916" width="646" height="1" fill="#000"/>
<rect x="915" y="908" width="11" height="1" fill="#000"/>
<rect x="915" y="900" width="11" height="1" fill="#000"/>
<rect x="915" y="892" width="11" height="1" fill="#000"/>
<rect x="915" y="884" width="20" height="1" fill="#000"/>
<rect x="915" y="875" width="11" height="1" fill="#000"/>
<rect x="915" y="867" width="11" height="1" fill="#000"/>
<rect x="915" y="859" width="11" height="1" fill="#000"/>
<rect x="915" y="851" width="20" height="1" fill="#000"/>
<rect x="915" y="843" width="11" height="1" fill="#000"/>
<rect x="915" y="835" width="11" height="1" fill="#000"/>
<rect x="915" y="827" width="11" height="1" fill="#000"/>
<rect x="915" y="819" width="20" height="1" fill="#000"/>
<rect x="915" y="811" width="11" height="1" fill="#000"/>
<rect x="915" y="803" width="11" height="1" fill="#000"/>
<rect x="915" y="795" width="11" height="1" fill="#000"/>
<rect x="915" y="786" width="20" height="1" fill="#000"/>
<rect x="915" y="778" width="11" height="1" fill="#000"/>
<rect x="915" y="770" width="11" height="1" fill="#000"/>
<rect x="915" y="762" width="11" height="1" fill="#000"/>
<rect x="915" y="754" width="20" height="1" fill="#000"/>
<rect x="915" y="746" width="11" height="1" fill="#000"/>
<rect x="915" y="738" width="11" height="1" fill="#000"/>
<rect x="915" y="730" width="11" height="1" fill="#000"/>
<rect x="915" y="722" width="20" height="1" fill="#000"/>
<rect x="915" y="714" width="11" height="1" fill="#000"/>
<rect x="915" y="706" width="11" height="1" fill="#000"/>
<rect x="915" y="697" width="11" height="1" fill="#000"/>
<rect x="915" y="689" width="20" height="1" fill="#000"/>
<rect x="915" y="681" width="11" height="1" fill="#000"/>
<rect x="915" y="673" width="11" height="1" fill="#000"/>
<rect x="915" y="665" width="11" height="1" fill="#000"/>
<rect x="915" y="657" width="20" height="1" fill="#000"/>
<rect x="915" y="649" width="11" height="1" fill="#000"/>
<rect x="915" y="641" width="11" height="1" fill="#000"/>
<rect x="915" y="633" width="11" height="1" fill="#000"/>
<rect x="915" y="625" width="20" height="1" fill="#000"/>
<rect x="915" y="617" width="11" height="1" fill="#000"/>
<rect x="915" y="608" width="11" height="1" fill="#000"/>
<rect x="915" y="600" width="11" height="1" fill="#000"/>
<rect x="915" y="592" width="20" height="1" fill="#000"/>
<rect x="915" y="584" width="11" height="1" fill="#000"/>
<text x="911" y="920.15" font-size="14.2" text-anchor="end">0</text>
<text x="911" y="887.93" font-size="14.2" text-anchor="end">0.2</text>
<text x="911" y="855.71" font-size="14.2" text-anchor="end">0.4</text>
<text x="911" y="823.49" font-size="14.2" text-anchor="end">0.6</text>
<text x="911" y="791.27" font-size="14.2" text-anchor="end">0.8</text>
<text x="911" y="759.05" font-size="14.2" text-anchor="end">1</text>
<text x="911" y="726.83" font-size="14.2" text-anchor="end">1.2</text>
<text x="911" y="694.61" font-size="14.2" text-anchor="end">1.4</text>
<text x="911" y="662.39" font-size="14.2" text-anchor="end">1.6</text>
<text x="911" y="630.17" font-size="14.2" text-anchor="end">1.8</text>
<text x="911" y="597.95" font-size="14.2" text-anchor="end">2</text>
<rect x="1130" y="906" width="1" height="11" fill="#000"/>
<rect x="1345" y="906" width="1" height="11" fill="#000"/>
<text x="1021" y="928" font-size="9" text-anchor="middle">S1_2_DSSD_TRIG_RATE</text>
<text x="1237" y="928" font-size="9" text-anchor="middle">S1_2_DSSD_CALC_RATE</text>
<text x="1452" y="928" font-size="9" text-anchor="middle">S1_2_DSSD_SENT_RATE</text>
<text x="914.8" y="591" font-size="20" font-weight="bold" fill="#ff0000">R</text>
<rect x="1464" y="537" width="160" height="67" fill="#f2f2f2"/>
<rect x="1625" y="539" width="1" height="67" fill="#000"/>
<rect x="1466" y="605" width="160" height="1" fill="#000"/>
<rect x="1463" y="536" width="162" height="1" fill="#000"/>
<rect x="1463" y="536" width="1" height="69" fill="#000"/>
<rect x="1624" y="536" width="1" height="69" fill="#000"/>
<rect x="1463" y="604" width="162" height="1" fill="#000"/>
<rect x="1463" y="553" width="162" height="1" fill="#000"/>
<text x="1543.5" y="547" font-size="9" font-weight="bold" text-anchor="middle">S1_2_DSSD_COUNTER_GRAPH</text>
<text x="1470.5" y="567" font-size="14.9" font-weight="bold">Entries</text>
<text x="1616.5" y="567" font-size="14.9" font-weight="bold" text-anchor="end">2109</text>
<text x="1470.5" y="584" font-size="14.9" font-weight="bold">Mean</text>
<text x="1616.5" y="584" font-size="14.9" font-weight="bold" text-anchor="end">0</text>
<text x="1470.5" y="601" font-size="14.9" font-weight="bold">Std Dev</text>
<text x="1616.5" y="601" font-size="14.9" font-weight="bold" text-anchor="end">0</text>
<rect x="1" y="979" width="501" height="1" fill="#8c8c8c"/>
<rect x="1" y="979" width="1" height="16" fill="#8c8c8c"/>
<rect x="1" y="994" width="501" height="1" fill="#ffffff"/>
<rect x="501" y="979" width="1" height="16" fill="#ffffff"/>
<text x="6 13 19 25 28 34 40 48 54 60 63 66" y="989" font-size="10">Pad number 1</text>
<rect x="504" y="979" width="332" height="1" fill="#8c8c8c"/>
<rect x="504" y="979" width="1" height="16" fill="#8c8c8c"/>
<rect x="504" y="994" width="332" height="1" fill="#ffffff"/>
<rect x="835" y="979" width="1" height="16" fill="#ffffff"/>
<text x="509 516 522 528 534" y="989" font-size="10">Pad_1</text>
<rect x="839" y="979" width="165" height="1" fill="#8c8c8c"/>
<rect x="839" y="979" width="1" height="16" fill="#8c8c8c"/>
<rect x="839" y="994" width="165" height="1" fill="#ffffff"/>
<rect x="1003" y="979" width="1" height="16" fill="#ffffff"/>
<text x="844 850 856 862 865 871 877" y="989" font-size="10">389,394</text>
<rect x="1006" y="979" width="673" height="1" fill="#8c8c8c"/>
<rect x="1006" y="979" width="1" height="16" fill="#8c8c8c"/>
<rect x="1006" y="994" width="673" height="1" fill="#ffffff"/>
<rect x="1678" y="979" width="1" height="16" fill="#ffffff"/>
<text x="1010.4 1015.4 1021.4 1027.4 1033.4 1039.4 1045.4 1048.4 1054.4 1060.4 1063.4 1066.4 1071.4 1077.4 1083.4 1086.4 1092.4 1098.4 1104.4 1110.4" y="989" font-size="10">x=7477.88, y=1.26281</text>
<path d="M1667 994 L1678 983 M1671 994 L1678 987 M1675 994 L1678 991" stroke="#888" stroke-width="1.3" shape-rendering="geometricPrecision"/>
<rect x="1" y="997" width="1679" height="15" fill="#66ff66"/>
<rect x="2" y="998" width="13" height="13" fill="#ffffff"/>
<rect x="2" y="998" width="12" height="1" fill="#808080"/>
<rect x="2" y="998" width="1" height="12" fill="#808080"/>
<rect x="3" y="999" width="10" height="1" fill="#000"/>
<rect x="3" y="999" width="1" height="10" fill="#000"/>
<rect x="13" y="999" width="1" height="11" fill="#c0c0c0"/>
<rect x="3" y="1009" width="11" height="1" fill="#c0c0c0"/>
<text x="192 201 210 219 229 237 244 247 257 266 275 283 286 289 292 299 302 305 308 315 322 325 332 335 338 344 351 358 364 367 374 378 385 388 392 399 402 406 413 419 426 433" y="1007" font-size="12">NORMAL MODE : all data types are refreshed</text>
</svg></body></html>
